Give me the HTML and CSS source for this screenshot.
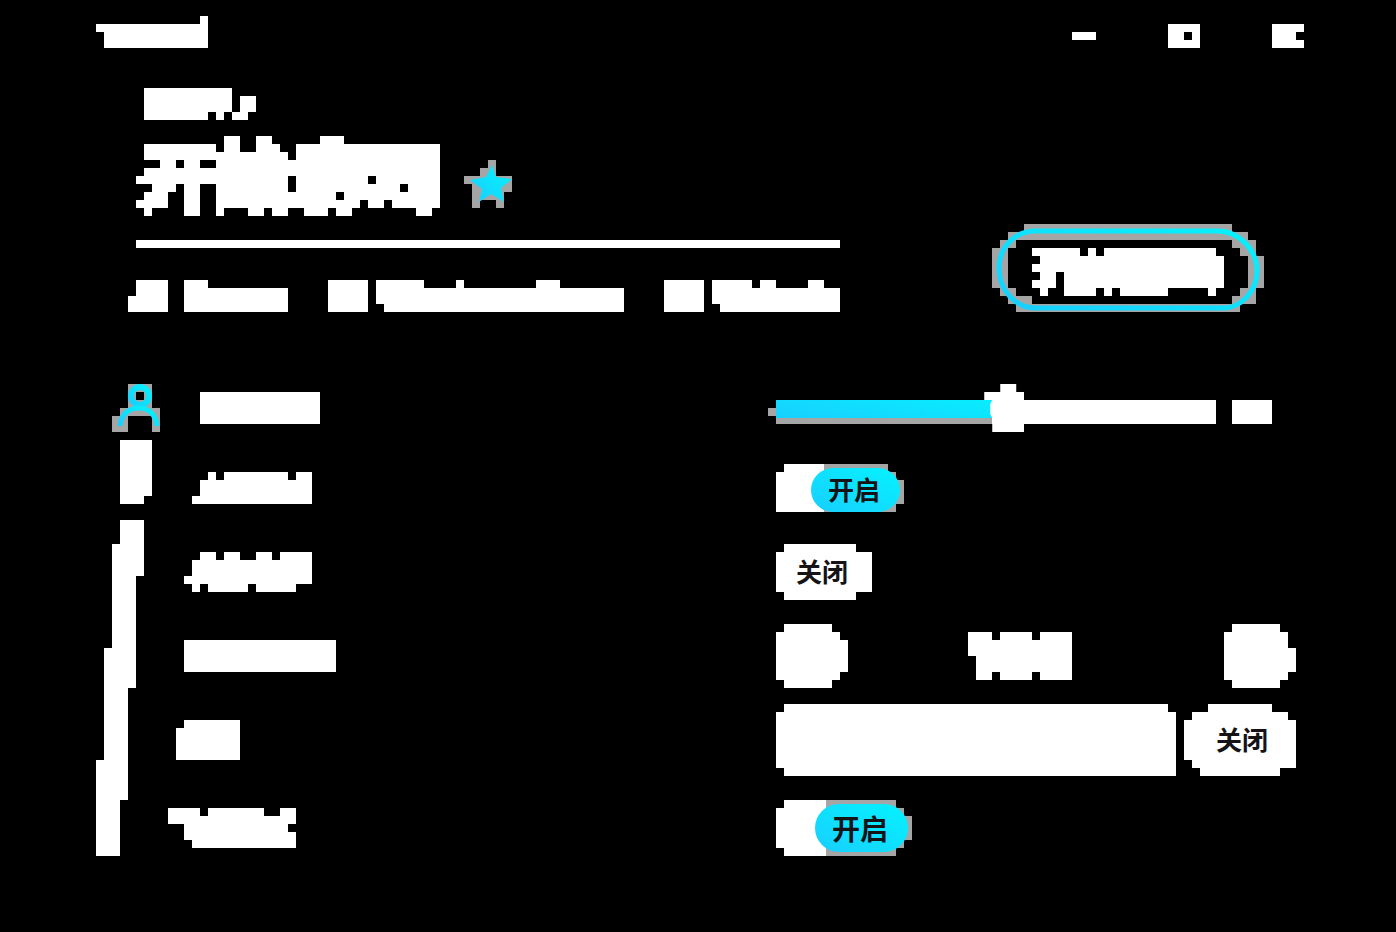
FILE: index.html
```html
<!DOCTYPE html>
<html lang="zh-CN">
<head>
<meta charset="utf-8">
<meta name="viewport" content="width=device-width, initial-scale=1">
<link rel="stylesheet" href="styles.css">
</head>
<body>
<svg class="defs" aria-hidden="true">
  <linearGradient id="cyan" x1="0" y1="1" x2="1" y2="0"><stop offset="0" stop-color="#18cfff"/><stop offset="1" stop-color="#05f2ff"/></linearGradient>
</svg>

<header class="titlebar">
  <svg class="block" width="112" height="32" viewBox="0 -.5 14 4"><path d="M13 0H14M0 1H14M1 2H14M1 3H14"/></svg>
  <div class="window-buttons">
    <button type="button"><svg class="block" width="24" height="24" viewBox="0 -.5 3 3"><path d="M0 1H3"/></svg></button>
    <button type="button"><svg class="block" width="32" height="24" viewBox="0 -.5 4 3"><path d="M0 0H4M0 1H2M3 1H4M0 2H4"/></svg></button>
    <button type="button"><svg class="block" width="32" height="24" viewBox="0 -.5 4 3"><path d="M0 0H4M0 1H3M0 2H4"/></svg></button>
  </div>
</header>

<main>
  <section class="hero">
    <div class="intro">
      <svg class="block subtitle" width="112" height="32" viewBox="0 -.5 14 4"><path d="M0 0H11M0 1H11M12 1H14M0 2H11M12 2H14M0 3H8M9 3H10M11 3H13"/></svg>
      <div class="heading">
        <svg class="block" width="304" height="80" viewBox="0 -.5 38 10"><path d="M11 0H13M15 0H17M23 0H26M1 1H10M11 1H13M15 1H18M20 1H38M1 2H19M20 2H38M3 3H5M6 3H8M10 3H38M1 4H38M0 5H19M20 5H29M30 5H38M2 6H5M6 6H8M10 6H19M20 6H33M34 6H38M1 7H4M6 7H8M10 7H25M26 7H38M0 8H4M6 8H8M10 8H28M29 8H31M32 8H38M1 9H2M6 9H8M10 9H11M14 9H16M17 9H19M21 9H24M25 9H27M35 9H37"/></svg>
        <svg class="star" width="48" height="48" viewBox="0 0 48 48">
          <path class="halo" transform="translate(0 4) scale(8)" d="M3 0H4M2 1H4M0 2H6M1 3H6M1 4H5M1 5H2M4 5H5"/>
          <path fill="url(#cyan)" d="M28 5L32 17L48 19L37 28L40 42L27 34L15 42L18 29L6 20L22 17Z"/>
        </svg>
      </div>
      <hr>
      <svg class="block" width="712" height="32" viewBox="0 -.5 89 4"><path d="M1 0H5M1 1H5M0 2H5M0 3H5M7 0H10M7 1H20M7 2H20M7 3H20M25 0H30M25 1H30M25 2H30M25 3H30M31 0H37M41 0H42M51 0H54M31 1H62M31 2H62M32 3H62M67 0H72M67 1H72M67 2H72M67 3H72M73 0H78M79 0H81M85 0H87M73 1H89M73 2H89M74 3H89"/></svg>
    </div>
    <button type="button" class="start">
      <svg width="272" height="88" viewBox="0 0 272 88">
        <path class="halo" transform="translate(0 4) scale(8)" d="M4 0H30M2 1H32M1 2H3M30 2H33M0 3H2M31 3H33M0 4H2M32 4H34M0 5H2M32 5H34M0 6H2M32 6H34M0 7H2M32 7H34M1 8H3M31 8H33M2 9H5M30 9H33M3 10H31"/>
        <path fill="none" stroke="url(#cyan)" stroke-width="5" d="M41 7H225C248 7 265 27 265 47C265 66 250 84 231 84H44C23 84 7 66 7 44C7 24 22 7 44 7"/>
        <path class="ink" transform="translate(40 28) scale(8)" d="M0 0H6M7 0H8M9 0H23M1 1H24M0 2H24M1 3H3M4 3H24M0 4H3M4 4H24M1 5H2M4 5H8M9 5H10M11 5H17M22 5H23"/>
      </svg>
    </button>
  </section>

  <section class="settings">
    <div class="rail">
      <svg width="48" height="48" viewBox="0 0 48 48">
        <path class="halo" transform="translate(0 4) scale(8)" d="M2 0H5M2 1H5M2 2H5M1 3H6M0 4H2M5 4H6M0 5H2M5 5H6"/>
        <circle cx="28" cy="12" r="9" fill="none" stroke="url(#cyan)" stroke-width="6"/>
        <path d="M24 8h8v8h-8z"/>
        <path fill="none" stroke="url(#cyan)" stroke-width="5" d="M8 42C9 31 16 24 27 24C37 24 44 31 45 42"/>
      </svg>
      <svg class="bar" width="56" height="416" viewBox="0 0 7 52"><path d="M3 0H7V7H6V8H3ZM3 10H6V17H5V31H4V45H3V52H0V40H1V26H2V13H3Z"/></svg>
    </div>

    <div class="rows">
      <div class="row">
        <label for="level"><svg class="block" width="168" height="56" viewBox="0 -.5 21 7"><path d="M4 1H19M4 2H19M4 3H19M4 4H19"/></svg></label>
        <div class="control range">
          <input id="level" type="range" min="0" max="100" value="53">
          <svg class="block" width="40" height="24" viewBox="0 -.5 5 3"><path d="M0 0H5M0 1H5M0 2H5"/></svg>
        </div>
      </div>

      <div class="row">
        <label for="first"><svg class="block" width="168" height="56" viewBox="0 -.5 21 7"><path d="M5 1H6M7 1H15M16 1H18M4 2H18M4 3H18M3 4H18"/></svg></label>
        <div class="control">
          <button id="first" type="button" class="choice on">
            <svg width="128" height="48" viewBox="0 0 128 48">
              <path class="halo" transform="translate(0 4) scale(8)" d="M5 0H14M5 1H15M5 2H16M5 3H16M5 4H16M5 5H15"/>
              <path fill="#fff" d="M8 0H48V48H0V8H8Z"/>
              <rect x="35" y="4" width="89" height="44" rx="22" fill="url(#cyan)"/>
            </svg>
            <span>开启</span>
          </button>
        </div>
      </div>

      <div class="row">
        <label for="second"><svg class="block" width="168" height="56" viewBox="0 -.5 21 7"><path d="M4 1H6M7 1H9M11 1H13M14 1H18M3 2H18M3 3H18M2 4H18M3 5H4M5 5H10M11 5H16"/></svg></label>
        <div class="control">
          <button id="second" type="button" class="choice off">
            <svg class="block" width="96" height="56" viewBox="0 -.5 12 7"><path d="M1 0H10M0 1H12M0 2H12M0 3H12M0 4H12M0 5H12M1 6H10"/></svg>
            <span>关闭</span>
          </button>
        </div>
      </div>

      <div class="row">
        <label for="previous"><svg class="block" width="168" height="56" viewBox="0 -.5 21 7"><path d="M2 2H21M2 3H21M2 4H21M2 5H21"/></svg></label>
        <div class="control stepper">
          <button id="previous" type="button"><svg class="block" width="72" height="64" viewBox="0 -.5 9 8"><path d="M1 0H7M0 1H8M0 2H9M0 3H9M0 4H9M0 5H9M0 6H8M1 7H7"/></svg></button>
          <svg class="block current" width="104" height="48" viewBox="0 -.5 13 6"><path d="M0 0H3M4 0H8M9 0H13M0 1H13M0 2H13M1 3H13M1 4H13M1 5H3M4 5H8M9 5H13"/></svg>
          <button type="button"><svg class="block" width="72" height="64" viewBox="0 -.5 9 8"><path d="M1 0H7M0 1H8M0 2H8M0 3H9M0 4H9M0 5H9M0 6H8M1 7H7"/></svg></button>
        </div>
      </div>

      <div class="row tall">
        <label for="field"><svg class="block" width="168" height="56" viewBox="0 -.5 21 7"><path d="M2 2H9M1 3H9M1 4H9M1 5H9M1 6H9"/></svg></label>
        <div class="control entry">
          <input id="field" type="text">
          <button type="button" class="choice off wide">
            <svg class="block" width="112" height="72" viewBox="0 -.5 14 9"><path d="M3 0H11M1 1H13M0 2H14M0 3H14M0 4H14M0 5H14M0 6H14M1 7H14M2 8H12"/></svg>
            <span>关闭</span>
          </button>
        </div>
      </div>

      <div class="row">
        <label for="third"><svg class="block" width="168" height="56" viewBox="0 -.5 21 7"><path d="M0 1H4M5 1H12M14 1H16M0 2H16M2 3H15M2 4H16M3 5H16"/></svg></label>
        <div class="control">
          <button id="third" type="button" class="choice on large">
            <svg width="136" height="56" viewBox="0 0 136 56">
              <path class="halo" transform="translate(0 4) scale(8)" d="M5 0H15M5 1H16M5 2H17M5 3H17M5 4H17M5 5H16M5 6H15"/>
              <path fill="#fff" d="M8 0H50V56H8V48H0V8H8Z"/>
              <rect x="39" y="4" width="93" height="48" rx="24" fill="url(#cyan)"/>
            </svg>
            <span>开启</span>
          </button>
        </div>
      </div>
    </div>
  </section>
</main>
</body>
</html>
```

FILE: styles.css
```css
* {
  box-sizing: border-box;
}

body {
  margin: 0;
  min-height: 100vh;
  background: #010001;
  color: #151316;
  font-family: "Noto Sans CJK SC", sans-serif;
}

svg {
  display: block;
  flex: none;
}

button {
  padding: 0;
  border: 0;
  background: none;
  color: inherit;
  font: inherit;
  cursor: pointer;
}

.defs {
  position: absolute;
  width: 0;
  height: 0;
}

.block,
.ink {
  stroke: #fff;
  shape-rendering: crispEdges;
}

.halo {
  stroke: #a5a5a5;
  shape-rendering: crispEdges;
}

.bar {
  fill: #fff;
  shape-rendering: crispEdges;
}

.titlebar {
  display: flex;
  justify-content: space-between;
  align-items: flex-end;
  padding: 16px 92px 0 96px;
}

.window-buttons {
  display: flex;
  gap: 72px;
}

.hero {
  display: flex;
  justify-content: space-between;
  align-items: flex-end;
  padding: 40px 132px 0 128px;
}

.subtitle {
  margin-left: 16px;
}

.heading {
  display: flex;
  align-items: center;
  gap: 24px;
  margin: 16px 0 24px 8px;
}

.star {
  margin-top: 16px;
}

.intro hr {
  height: 8px;
  margin: 0 0 32px 8px;
  border: 0;
  background: #fff;
}

.settings {
  display: flex;
  padding: 72px 96px 0 96px;
}

.rail {
  display: flex;
  flex-direction: column;
  gap: 8px;
  width: 72px;
}

.rail svg:first-child {
  margin-left: 16px;
}

.rows {
  flex: 1;
}

.row {
  display: flex;
  justify-content: space-between;
  align-items: flex-start;
  min-height: 80px;
}

.tall {
  min-height: 96px;
}

.control {
  display: flex;
  width: 532px;
  padding: 0 4px 0 8px;
}

.range {
  align-items: flex-end;
  gap: 16px;
  padding: 0 28px 0 0;
}

.range svg {
  margin-bottom: 8px;
}

.range input {
  flex: 1;
  min-width: 0;
  height: 48px;
  margin: 0;
  appearance: none;
  background:
    linear-gradient(10deg, #18cfff, #08edff) 8px 16px / 216px 18px no-repeat,
    linear-gradient(#a5a5a5, #a5a5a5) 8px 16px / 216px 24px no-repeat,
    linear-gradient(#a5a5a5, #a5a5a5) 0 24px / 8px 8px no-repeat,
    linear-gradient(#fff, #fff) 224px 16px / 100% 24px no-repeat;
}

.range input::-webkit-slider-thumb {
  width: 40px;
  height: 48px;
  border: 0;
  appearance: none;
  background: #fff;
  clip-path: polygon(16px 0, 32px 0, 32px 8px, 40px 8px, 40px 48px, 8px 48px, 8px 34px, 6px 30px, 6px 20px, 8px 16px, 0 16px, 0 8px, 16px 8px);
}

.choice {
  display: grid;
  align-items: center;
  font-size: 26px;
  font-weight: 700;
  line-height: 32px;
}

.choice svg,
.choice span {
  grid-area: 1 / 1;
}

.choice span {
  padding: 0 0 2px 20px;
  text-align: left;
}

.choice.on span {
  padding: 2px 0 0 52px;
}

.choice.wide span {
  padding-left: 32px;
}

.choice.large span {
  padding: 0 0 0 56px;
  font-size: 28px;
}

.stepper {
  justify-content: space-between;
  align-items: center;
}

.stepper .current {
  margin-right: 32px;
}

.entry {
  gap: 8px;
}

.entry input {
  flex: 1;
  min-width: 0;
  height: 72px;
  padding: 0 24px;
  border: 0;
  background: #fff;
  font: 26px "Noto Sans CJK SC", sans-serif;
  clip-path: polygon(8px 0, calc(100% - 8px) 0, calc(100% - 8px) 8px, 100% 8px, 100% 100%, 8px 100%, 8px 64px, 0 64px, 0 8px, 8px 8px);
}
```
